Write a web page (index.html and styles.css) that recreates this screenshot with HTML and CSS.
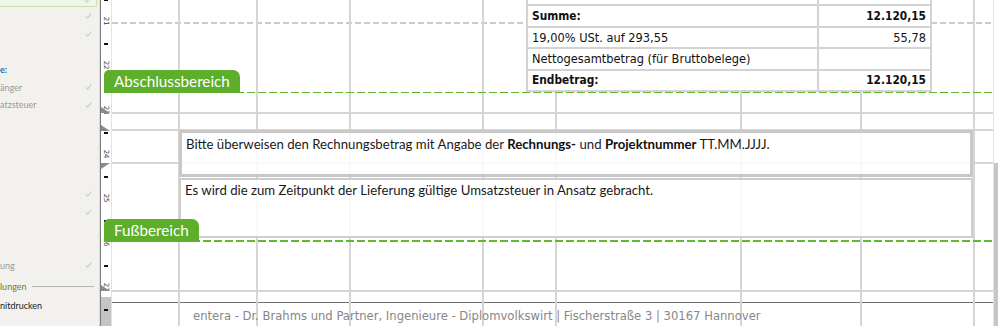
FILE: index.html
```html
<!DOCTYPE html>
<html lang="de">
<head>
    <meta charset="UTF-8">
    <meta name="viewport" content="width=device-width, initial-scale=1.0">
    <title>Layout - Abschluss- und Fußbereich</title>
    <link rel="stylesheet" href="styles.css">
</head>
<body>
<div class="app">
    <aside class="sidebar">
        <div class="sb-card">
            <svg class="sb-check" viewBox="0 0 8 7"><polyline points="0.8,3.8 3,6 7.2,0.8"/></svg>
        </div>
        <ul class="sb-list">
            <li><svg class="sb-check" viewBox="0 0 8 7"><polyline points="0.8,3.8 3,6 7.2,0.8"/></svg></li>
            <li><svg class="sb-check" viewBox="0 0 8 7"><polyline points="0.8,3.8 3,6 7.2,0.8"/></svg></li>
            <li></li>
            <li class="sb-group">e:</li>
            <li><span class="sb-text">änger</span><svg class="sb-check" viewBox="0 0 8 7"><polyline points="0.8,3.8 3,6 7.2,0.8"/></svg></li>
            <li><span class="sb-text">atzsteuer</span><svg class="sb-check" viewBox="0 0 8 7"><polyline points="0.8,3.8 3,6 7.2,0.8"/></svg></li>
            <li></li>
            <li></li>
            <li></li>
            <li></li>
            <li><svg class="sb-check" viewBox="0 0 8 7"><polyline points="0.8,3.8 3,6 7.2,0.8"/></svg></li>
            <li><svg class="sb-check" viewBox="0 0 8 7"><polyline points="0.8,3.8 3,6 7.2,0.8"/></svg></li>
            <li></li>
            <li></li>
            <li><span class="sb-text">ung</span><svg class="sb-check" viewBox="0 0 8 7"><polyline points="0.8,3.8 3,6 7.2,0.8"/></svg></li>
            <li class="sb-head">lungen</li>
            <li class="sb-option">nitdrucken</li>
        </ul>
    </aside>

    <div class="ruler">
        <div class="rl-seg"><span class="rl-num">21</span></div>
        <div class="rl-seg"><span class="rl-num">22</span></div>
        <div class="rl-seg"><span class="rl-num">23</span></div>
        <div class="rl-seg"><span class="rl-num">24</span></div>
        <div class="rl-seg"><span class="rl-num">25</span></div>
        <div class="rl-seg"><span class="rl-num">26</span></div>
        <div class="rl-seg"><span class="rl-num">27</span></div>
        <div class="rl-seg"></div>
        <!-- guide markers -->
        <span class="rl-marker m1"></span>
        <span class="rl-marker m2"></span>
        <span class="rl-marker m3"></span>
        <span class="rl-marker m4"></span>
    </div>

    <main class="canvas">
        <div class="guides"></div>

        <section class="area area-close">
            <table class="totals">
                <tr class="stub"><td></td><td></td></tr>
                <tr class="strong"><td>Summe:</td><td class="num">12.120,15</td></tr>
                <tr><td>19,00% USt. auf 293,55</td><td class="num">55,78</td></tr>
                <tr><td>Nettogesamtbetrag (für Bruttobelege)</td><td></td></tr>
                <tr class="strong"><td>Endbetrag:</td><td class="num">12.120,15</td></tr>
            </table>
            <span class="area-tag">Abschlussbereich</span>
            <div class="area-edge"></div>
        </section>

        <section class="area area-foot">
            <div class="text-box box-first">
                Bitte überweisen den Rechnungsbetrag mit Angabe der <b>Rechnungs-</b> und <b>Projektnummer</b> TT.MM.JJJJ.
            </div>
            <div class="text-box">
                Es wird die zum Zeitpunkt der Lieferung gültige Umsatzsteuer in Ansatz gebracht.
            </div>
            <span class="area-tag">Fußbereich</span>
            <div class="area-edge"></div>
        </section>

        <footer class="page-footer">entera - Dr. Brahms und Partner, Ingenieure - Diplomvolkswirt | Fischerstraße 3 | 30167 Hannover</footer>
    </main>

    <div class="scrollbar"><div class="thumb"></div></div>
</div>
</body>
</html>
```
FILE: styles.css
```css
* { box-sizing: border-box; }
body { margin: 0; width: 998px; height: 326px; overflow: hidden; background: #fff; font-family: Lato, "Open Sans", sans-serif; }
.app { display: flex; height: 326px; }

/* left panel */
.sidebar { width: 100px; flex: none; background: #f2f1ee; border-right: 1px solid #dcdbd7; overflow: hidden; font-size: 9px; }
.sb-card {
    height: 7px;
    margin-right: 2px;
    padding-right: 5px;
    display: flex;
    justify-content: flex-end;
    align-items: flex-start;
    background: #eef6e6;
    border: 1px solid #c9e0b3;
    border-top: none;
    border-left: none;
    overflow: hidden;
}
.sb-card .sb-check { margin-top: -3px; }
.sb-list { list-style: none; margin: 0; padding: 0; }
.sb-list li { height: 17.8px; display: flex; align-items: center; justify-content: space-between; padding-right: 7px; }
.sb-check { width: 7px; height: 6px; margin-left: auto; fill: none; stroke: #bfd4ae; stroke-width: 1.2; }
.sb-text { color: #9a9a9a; }
.sb-group { color: #1f6fb8; font-weight: bold; }
.sb-list .sb-head { height: 18px; margin-top: 4px; color: #6f7f2e; padding-right: 5px; }
.sb-head::after { content: ""; flex: 1; height: 1px; margin-left: 5px; background: #b4b4b0; }
.sb-list .sb-option { height: 20px; color: #1b1b1b; }

/* vertical ruler */
.ruler {
    width: 12px;
    flex: none;
    position: relative;
    background: linear-gradient(#fff 297px, #c4c4c4 297px);
    border-left: 1px solid #7c7c7c;
    border-right: 1px solid #e2e2e2;
    overflow: hidden;
}
.rl-seg {
    height: 44.25px;
    display: flex;
    align-items: center;
    justify-content: center;
    background: linear-gradient(#111, #111) no-repeat 3px 0 / 4px 2px;
}
.ruler .rl-seg:first-child { margin-top: -1px; }
.rl-num { font: 7px "DejaVu Sans", sans-serif; color: #3a3a3a; transform: rotate(90deg); letter-spacing: -0.3px; }
.rl-marker {
    position: absolute;
    left: 0;
    width: 9px;
    height: 6px;
    background: #8b8b8b;
    clip-path: polygon(0 0, 0 100%, 100% 100%);
}
.m1 { top: 107px; }
.m2 { top: 125px; }
.m3 { top: 163px; clip-path: polygon(0 0, 100% 0, 0 100%); }
.m4 { top: 285px; }

/* canvas */
.canvas { flex: 1; position: relative; display: flex; flex-direction: column; }
.guides {
    position: absolute;
    top: 0; left: 0; right: 0; bottom: 0;
    background:
        linear-gradient(#d5d5d5, #d5d5d5) 66px 0 / 2px 100% no-repeat,
        linear-gradient(#d5d5d5, #d5d5d5) 144px 0 / 2px 100% no-repeat,
        linear-gradient(#d5d5d5, #d5d5d5) 237px 0 / 2px 100% no-repeat,
        linear-gradient(#d5d5d5, #d5d5d5) 370px 0 / 2px 100% no-repeat,
        linear-gradient(#d5d5d5, #d5d5d5) 443px 0 / 2px 100% no-repeat,
        linear-gradient(#d5d5d5, #d5d5d5) 628px 0 / 2px 100% no-repeat,
        linear-gradient(#d5d5d5, #d5d5d5) 748px 0 / 2px 100% no-repeat,
        linear-gradient(#d5d5d5, #d5d5d5) 861px 0 / 2px 100% no-repeat,
        repeating-linear-gradient(90deg, #cacaca 0 6px, transparent 6px 9px) 0 22px / 100% 2px no-repeat,
        linear-gradient(#d5d5d5, #d5d5d5) 0 112px / 100% 2px no-repeat,
        linear-gradient(#d5d5d5, #d5d5d5) 0 129px / 100% 2px no-repeat,
        linear-gradient(#d5d5d5, #d5d5d5) 0 162px / 100% 2px no-repeat,
        linear-gradient(#d5d5d5, #d5d5d5) 0 290px / 100% 2px no-repeat,
        linear-gradient(#6f6f6f, #6f6f6f) 0 302px / 100% 1px no-repeat;
}
.area { position: relative; z-index: 1; display: flex; flex-direction: column; }
.area-edge {
    height: 2px;
    margin-top: auto;
    margin-left: -8px;
    background: repeating-linear-gradient(90deg, #62b72f 0 8px, transparent 8px 11px);
}
.area-tag {
    position: absolute;
    left: -8px;
    bottom: 0;
    height: 23px;
    padding: 0 10px;
    line-height: 23px;
    font-size: 15.25px;
    color: #fff;
    background: #5dae2a;
    border-radius: 5px 7px 0 0;
}
.area-close { height: 93px; }
.area-foot { height: 149px; padding-top: 37px; }

/* totals table */
.totals {
    margin-left: 414px;
    width: 406px;
    border-collapse: collapse;
    background: #fff;
    font: 12.7px "DejaVu Sans Condensed", "DejaVu Sans", sans-serif;
    color: #111;
}
.totals td { height: 21.5px; padding: 0 4px; border: 2px solid #d3d3d3; white-space: nowrap; }
.totals td:first-child { width: 291px; }
.totals .stub td { height: 5px; border-top: none; }
.totals .strong td { border-top: 2px solid #161616; font-weight: bold; font-size: 11.8px; }
.totals .num { text-align: right; }

/* text boxes */
.text-box {
    margin-left: 67px;
    width: 794px;
    padding: 3px 4px 0;
    border: 2px solid #cdcdcd;
    background: rgba(255, 255, 255, 0.85);
    font-size: 13.2px;
    line-height: 13px;
    color: #1a1a1a;
}
.text-box b { color: #111; }
.box-first { height: 47px; border: 3px solid #c8c8c8; padding-top: 5px; }
.box-first + .text-box { height: 60px; margin-top: 1px; padding-top: 4px; }

.page-footer {
    position: relative;
    z-index: 1;
    margin: 66px 0 0 81px;
    font: 12.9px "DejaVu Sans Condensed", "DejaVu Sans", sans-serif;
    line-height: 15px;
    color: #878787;
    white-space: nowrap;
}

.scrollbar { width: 5px; flex: none; display: flex; flex-direction: column; border-left: 1px solid #e3e3e3; }
.thumb { margin-top: 163px; flex: 1; background: #c6c6c6; }
```
